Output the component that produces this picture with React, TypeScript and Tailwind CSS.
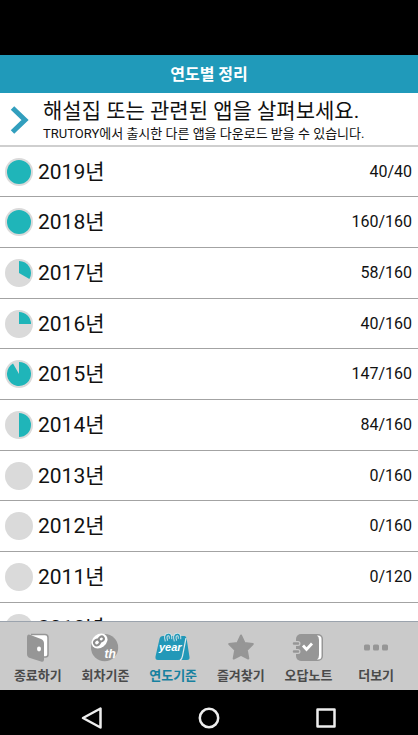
import type { ReactNode } from "react";

type YearProgress = {
  year: number;
  solved: number;
  total: number;
};

const years: YearProgress[] = [
  { year: 2019, solved: 40, total: 40 },
  { year: 2018, solved: 160, total: 160 },
  { year: 2017, solved: 58, total: 160 },
  { year: 2016, solved: 40, total: 160 },
  { year: 2015, solved: 147, total: 160 },
  { year: 2014, solved: 84, total: 160 },
  { year: 2013, solved: 0, total: 160 },
  { year: 2012, solved: 0, total: 160 },
  { year: 2011, solved: 0, total: 120 },
  { year: 2010, solved: 0, total: 120 },
];

// The pie moves in twelfths, like a clock face
function ProgressPie({ solved, total }: { solved: number; total: number }) {
  const ratio = Math.floor((solved / total) * 12 + 0.1) / 12;
  const angle = ratio * 2 * Math.PI;
  const x = 14 + 12 * Math.sin(angle);
  const y = 14 - 12 * Math.cos(angle);

  return (
    <svg viewBox="0 0 28 28" className="size-7 shrink-0" aria-hidden="true">
      <circle cx="14" cy="14" r="14" fill="#dadada" />
      {ratio >= 1 && <circle cx="14" cy="14" r="12" fill="#1fb5b9" />}
      {ratio > 0 && ratio < 1 && (
        <path d={`M14 14V2A12 12 0 ${ratio > 0.5 ? 1 : 0} 1 ${x} ${y}Z`} fill="#1fb5b9" />
      )}
    </svg>
  );
}

function YearRow({ year, solved, total }: YearProgress) {
  return (
    <li className="h-[51px] border-b border-[#a3a3a3] nth-[3n+1]:h-[50px]">
      <button type="button" className="flex size-full items-center px-[5px] text-left">
        <ProgressPie solved={solved} total={total} />
        <span className="ml-[5px] flex-1 text-[21px] leading-7">{year}년</span>
        <span className="pr-px text-[16px] leading-6">
          {solved}/{total}
        </span>
      </button>
    </li>
  );
}

const DoorIcon = () => (
  <svg viewBox="0 0 28 32" className="h-8 w-7" aria-hidden="true">
    <path d="M7 3.500H21Q24 3.500 24 6.500V23.500Q24 26 21.500 26H17" fill="#fff" stroke="#969696" strokeWidth="1.500" />
    <path d="M3 6.500Q3 2.500 6.500 4L17 8Q20 9 20 12.500V28.500Q20 31.500 17 30.500L6 27Q3 26 3 23Z" fill="#969696" />
    <ellipse cx="15" cy="18" rx="2" ry="2.400" fill="#fff" />
  </svg>
);

const BallIcon = () => (
  <svg viewBox="0 0 32 32" className="size-8" aria-hidden="true">
    <circle cx="15.600" cy="16.700" r="13.600" fill="#969696" />
    <ellipse cx="10.500" cy="10" rx="8.600" ry="6.800" transform="rotate(-38 10.500 10)" fill="#fff" />
    <g fill="none" stroke="#8d8d8d" strokeWidth="2">
      <ellipse cx="8" cy="11.500" rx="3" ry="2.700" transform="rotate(-38 8 11.500)" />
      <ellipse cx="12.300" cy="8" rx="2.700" ry="2.300" transform="rotate(-38 12.300 8)" />
    </g>
    <text x="15.500" y="26.500" fontFamily="Liberation Sans" fontSize="12" fontWeight="700" fontStyle="italic" fill="#fff">
      th
    </text>
  </svg>
);

const CalendarIcon = () => (
  <svg viewBox="0 0 36 32" className="h-8 w-9" aria-hidden="true">
    <path d="M8 5H29Q31 5 31.500 7L34.500 26Q35 29 32 29H25Z" fill="#2298b8" />
    <path d="M8 5H28Q31 5 30.500 8L27 26Q26.500 29 23 29H3Q0 29 0.500 25.500L4.500 8Q5.200 5 8 5Z" fill="#2298b8" />
    <path d="M31 7L27.500 25Q27 28 25 29.500" fill="none" stroke="#dce8eb" strokeWidth="1.300" />
    <g fill="none">
      <path d="M11.500 10Q9.500 4 13 3.500Q16 3 15.500 8M20.500 10Q18.500 4 22 3.500Q25 3 24.500 8" stroke="#cfe2e7" strokeWidth="3.500" />
      <path d="M11.500 10Q9.500 4 13 3.500Q16 3 15.500 8M20.500 10Q18.500 4 22 3.500Q25 3 24.500 8" stroke="#2298b8" strokeWidth="1.500" />
    </g>
    <text x="4" y="20" fontFamily="Liberation Sans" fontSize="11" fontWeight="700" fontStyle="italic" fill="#fff">
      year
    </text>
  </svg>
);

const StarIcon = () => (
  <svg viewBox="0 0 32 32" className="size-8" aria-hidden="true">
    <path
      d="M16 4.500L19.500 12L27.800 13L21.800 19L23.300 27.500L16 23.800L8.700 27.500L10.200 19L4.200 13L12.500 12Z"
      fill="#969696"
      stroke="#969696"
      strokeWidth="2"
      strokeLinejoin="round"
    />
  </svg>
);

const NoteIcon = () => (
  <svg viewBox="0 0 32 32" className="size-8" aria-hidden="true">
    <rect x="4" y="3" width="27" height="27" rx="5" fill="#969696" />
    <path d="M25 4.500H26Q29.500 4.500 29.500 8V25Q29.500 28.500 26 28.500H25Q27 27.500 27 24V9Q27 5.500 25 4.500Z" fill="#fff" />
    <path d="M2 12.500H6M2 20.500H6" stroke="#cacaca" strokeWidth="5" strokeLinecap="round" />
    <path d="M2 12.500H6M2 20.500H6" stroke="#969696" strokeWidth="2.500" strokeLinecap="round" />
    <path d="M11 14.500L14.500 18.500L20 12.500" fill="none" stroke="#fff" strokeWidth="2.800" />
  </svg>
);

const MoreIcon = () => (
  <svg viewBox="0 0 32 32" className="size-8" aria-hidden="true">
    <g fill="#969696">
      <rect x="4" y="13.500" width="6" height="6" rx="1.500" />
      <rect x="13" y="13.500" width="6" height="6" rx="1.500" />
      <rect x="22" y="13.500" width="6" height="6" rx="1.500" />
    </g>
  </svg>
);

const tabs: { label: string; icon: ReactNode; active?: boolean }[] = [
  { label: "종료하기", icon: <DoorIcon /> },
  { label: "회차기준", icon: <BallIcon /> },
  { label: "연도기준", icon: <CalendarIcon />, active: true },
  { label: "즐겨찾기", icon: <StarIcon /> },
  { label: "오답노트", icon: <NoteIcon /> },
  { label: "더보기", icon: <MoreIcon /> },
];

function TabBar() {
  return (
    <nav className="grid shrink-0 grid-cols-6 border-t border-[#9ba3ad] bg-[#cacaca] pt-[9px] pr-2 pb-1 pl-1">
      {tabs.map((tab) => (
        <button
          key={tab.label}
          type="button"
          aria-current={tab.active ? "page" : undefined}
          className={`flex flex-col items-center gap-[3px] text-[13px] leading-5 font-bold whitespace-nowrap ${
            tab.active ? "text-[#17819f]" : "text-[#4a4a4a]"
          }`}
        >
          {tab.icon}
          {tab.label}
        </button>
      ))}
    </nav>
  );
}

function SystemBar() {
  return (
    <div className="flex h-[45px] shrink-0 items-center justify-center gap-[89px] bg-black pt-[10px] pr-px">
      <button type="button" aria-label="뒤로">
        <svg viewBox="0 0 28 28" className="size-7" fill="none" stroke="#eee" strokeWidth="2.500" strokeLinejoin="round">
          <path d="M22.500 4.500V23.500L5 14Z" />
        </svg>
      </button>
      <button type="button" aria-label="홈">
        <svg viewBox="0 0 28 28" className="size-7" fill="none" stroke="#eee" strokeWidth="2.500">
          <circle cx="14" cy="14" r="9.200" />
        </svg>
      </button>
      <button type="button" aria-label="최근 앱">
        <svg viewBox="0 0 28 28" className="size-7" fill="none" stroke="#eee" strokeWidth="2.500" strokeLinejoin="round">
          <rect x="5.500" y="5.500" width="17" height="17" />
        </svg>
      </button>
    </div>
  );
}

export default function App() {
  return (
    <div className="flex h-screen flex-col bg-white font-[Roboto,'Noto_Sans_CJK_KR',sans-serif] text-[#111]">
      <header className="shrink-0 bg-[#209aba] pt-[55px] shadow-[inset_0_55px_0_#000]">
        <h1 className="flex h-[38px] items-center justify-center pt-px text-[16px] leading-6 font-bold text-white">
          연도별 정리
        </h1>
      </header>

      <main className="min-h-0 flex-1 overflow-y-auto [scrollbar-width:none]">
        <button
          type="button"
          className="flex h-[54px] w-full items-center border-b-2 border-[#cfcfcf] pt-px text-left whitespace-nowrap"
        >
          <svg viewBox="0 0 43 30" className="h-[30px] w-[43px] shrink-0" aria-hidden="true">
            <path d="M12.500 3L25 15L12.500 27" fill="none" stroke="#329fbe" strokeWidth="5" />
          </svg>
          <span>
            <span className="block text-[21px] leading-7">해설집 또는 관련된 앱을 살펴보세요.</span>
            <span className="block text-[13px] leading-[18px]">
              TRUTORY에서 출시한 다른 앱을 다운로드 받을 수 있습니다.
            </span>
          </span>
        </button>
        <ul>
          {years.map((item) => (
            <YearRow key={item.year} {...item} />
          ))}
        </ul>
      </main>

      <TabBar />
      <SystemBar />
    </div>
  );
}
